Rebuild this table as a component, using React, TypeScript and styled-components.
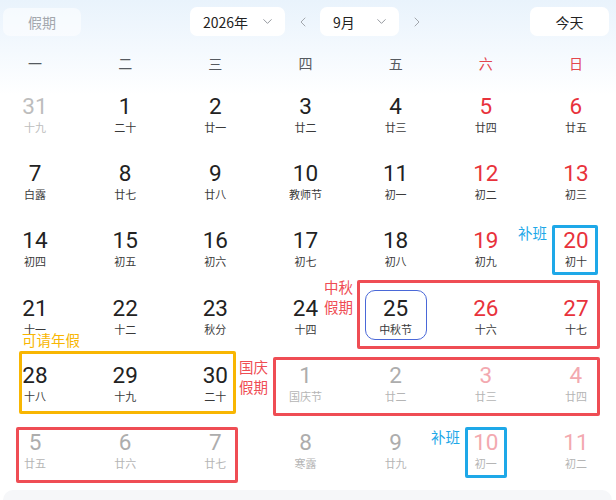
import React from "react";
import styled, { createGlobalStyle } from "styled-components";
import { ChevronDown, ChevronLeft, ChevronRight } from "lucide-react";

type Tone = "normal" | "red" | "dim" | "muted" | "pink";

const GlobalStyle = createGlobalStyle`
  html, body {
    margin: 0;
    padding: 0;
    background: #ffffff;
  }
  body {
    font-family: "Noto Sans CJK SC", "Noto Sans", sans-serif;
  }
`;

const Page = styled.div`
  position: relative;
  width: 616px;
  height: 500px;
  overflow: hidden;
  background: linear-gradient(180deg, #e9f3fc 0px, #f4f9fe 50px, #ffffff 95px);
`;

const Toolbar = styled.header`
  display: flex;
  align-items: center;
  height: 29px;
  padding: 7px 7px 10px 3px;
`;

const GhostButton = styled.button`
  width: 78px;
  height: 28px;
  border: none;
  border-radius: 7px;
  background: rgba(255, 255, 255, 0.55);
  color: #a3a7ad;
  font-family: inherit;
  font-size: 14px;
  padding: 0;
`;

const TodayButton = styled.button`
  margin-left: auto;
  width: 79px;
  height: 29px;
  border: none;
  border-radius: 7px;
  background: #ffffff;
  color: #222;
  font-family: inherit;
  font-size: 14px;
  padding: 0;
`;

const Picker = styled.div<{ $w: number }>`
  display: flex;
  align-items: center;
  justify-content: space-between;
  box-sizing: border-box;
  height: 29px;
  width: ${(p) => p.$w}px;
  padding: 0 10px 0 13px;
  border-radius: 7px;
  background: #ffffff;
  color: #222;
  font-size: 14px;
`;

const PickerGroup = styled.div`
  display: flex;
  align-items: center;
  margin-left: 109px;
`;

const Arrow = styled.span`
  display: flex;
  align-items: center;
  justify-content: center;
  width: 35px;
  color: #a3a7ad;
`;

const Weekdays = styled.div`
  display: grid;
  grid-template-columns: repeat(7, 70px);
  justify-content: space-between;
  width: 611px;
  height: 34px;
  align-items: center;
`;

const Weekday = styled.span<{ $weekend?: boolean }>`
  text-align: center;
  font-size: 14px;
  color: ${(p) => (p.$weekend ? "#e3464d" : "#555a60")};
`;

const Grid = styled.div`
  display: grid;
  grid-template-columns: repeat(7, 70px);
  grid-auto-rows: 67.2px;
  justify-content: space-between;
  width: 611px;
`;

const numberColor: Record<Tone, string> = {
  normal: "#222222",
  red: "#e8323b",
  dim: "#bdbdbd",
  muted: "#adadad",
  pink: "#f3a9b0",
};

const lunarColor: Record<Tone, string> = {
  normal: "#3a3a3a",
  red: "#3a3a3a",
  dim: "#bdbdbd",
  muted: "#b5b5b5",
  pink: "#b5b5b5",
};

const Cell = styled.div`
  display: flex;
  flex-direction: column;
  align-items: center;
  justify-content: center;
  gap: 2px;
  padding-top: 1px;
`;

const DayNum = styled.span<{ $tone: Tone }>`
  font-family: Roboto, "Noto Sans", sans-serif;
  font-size: 22.5px;
  line-height: 24px;
  color: ${(p) => numberColor[p.$tone]};
`;

const Lunar = styled.span<{ $tone: Tone }>`
  font-size: 11px;
  line-height: 14px;
  color: ${(p) => lunarColor[p.$tone]};
`;

const BottomPanel = styled.div`
  position: absolute;
  left: 3px;
  right: 4px;
  top: 490px;
  height: 30px;
  border-radius: 10px;
  background: #f6f7f9;
`;

const Box = styled.div<{ $color: string; $w?: number; $r?: number }>`
  position: absolute;
  box-sizing: border-box;
  border: ${(p) => p.$w ?? 3}px solid ${(p) => p.$color};
  border-radius: ${(p) => p.$r ?? 2}px;
`;

const Note = styled.span<{ $color: string }>`
  position: absolute;
  font-size: 14.5px;
  line-height: 20px;
  color: ${(p) => p.$color};
  white-space: pre;
`;

const RED = "#ef4d54";
const BLUE = "#1ea8e8";
const YELLOW = "#f8b602";

type Day = [string, string, Tone];

const days: Day[] = [
  ["31", "十九", "dim"], ["1", "二十", "normal"], ["2", "廿一", "normal"], ["3", "廿二", "normal"], ["4", "廿三", "normal"], ["5", "廿四", "red"], ["6", "廿五", "red"],
  ["7", "白露", "normal"], ["8", "廿七", "normal"], ["9", "廿八", "normal"], ["10", "教师节", "normal"], ["11", "初一", "normal"], ["12", "初二", "red"], ["13", "初三", "red"],
  ["14", "初四", "normal"], ["15", "初五", "normal"], ["16", "初六", "normal"], ["17", "初七", "normal"], ["18", "初八", "normal"], ["19", "初九", "red"], ["20", "初十", "red"],
  ["21", "十一", "normal"], ["22", "十二", "normal"], ["23", "秋分", "normal"], ["24", "十四", "normal"], ["25", "中秋节", "normal"], ["26", "十六", "red"], ["27", "十七", "red"],
  ["28", "十八", "normal"], ["29", "十九", "normal"], ["30", "二十", "normal"], ["1", "国庆节", "muted"], ["2", "廿二", "muted"], ["3", "廿三", "pink"], ["4", "廿四", "pink"],
  ["5", "廿五", "muted"], ["6", "廿六", "muted"], ["7", "廿七", "muted"], ["8", "寒露", "muted"], ["9", "廿九", "muted"], ["10", "初一", "pink"], ["11", "初二", "pink"],
];

const weekdays = ["一", "二", "三", "四", "五", "六", "日"];

export default function App() {
  return (
    <Page>
      <GlobalStyle />
      <Toolbar>
        <GhostButton>假期</GhostButton>
        <PickerGroup>
          <Picker $w={95}>
            <span>2026年</span>
            <ChevronDown size={15} strokeWidth={1.5} color="#8d9197" />
          </Picker>
          <Arrow>
            <ChevronLeft size={16} strokeWidth={1.5} />
          </Arrow>
          <Picker $w={79}>
            <span>9月</span>
            <ChevronDown size={15} strokeWidth={1.5} color="#8d9197" />
          </Picker>
          <Arrow>
            <ChevronRight size={16} strokeWidth={1.5} />
          </Arrow>
        </PickerGroup>
        <TodayButton>今天</TodayButton>
      </Toolbar>

      <Weekdays>
        {weekdays.map((w, i) => (
          <Weekday key={w} $weekend={i >= 5}>
            {w}
          </Weekday>
        ))}
      </Weekdays>

      <Grid>
        {days.map(([n, l, tone], i) => (
          <Cell key={i}>
            <DayNum $tone={tone}>{n}</DayNum>
            <Lunar $tone={tone}>{l}</Lunar>
          </Cell>
        ))}
      </Grid>

      <BottomPanel />

      {/* annotations drawn over the calendar */}
      <Note $color={BLUE} style={{ left: 518, top: 223 }}>补班</Note>
      <Box $color={BLUE} style={{ left: 552, top: 225, width: 46, height: 50 }} />

      <Note $color={RED} style={{ left: 324, top: 277 }}>{"中秋\n假期"}</Note>
      <Box $color={RED} style={{ left: 357, top: 280, width: 243, height: 69 }} />
      <Box $color="#4a68d8" $w={1.5} $r={10} style={{ left: 365, top: 290, width: 62, height: 50 }} />

      <Note $color={YELLOW} style={{ left: 22, top: 330 }}>可请年假</Note>
      <Box $color={YELLOW} style={{ left: 19, top: 351, width: 217, height: 63 }} />

      <Note $color={RED} style={{ left: 239, top: 357 }}>{"国庆\n假期"}</Note>
      <Box $color={RED} style={{ left: 273, top: 357, width: 327, height: 59 }} />

      <Box $color={RED} style={{ left: 16, top: 427, width: 222, height: 56 }} />

      <Note $color={BLUE} style={{ left: 431, top: 427 }}>补班</Note>
      <Box $color={BLUE} style={{ left: 465, top: 427, width: 42, height: 51 }} />
    </Page>
  );
}
